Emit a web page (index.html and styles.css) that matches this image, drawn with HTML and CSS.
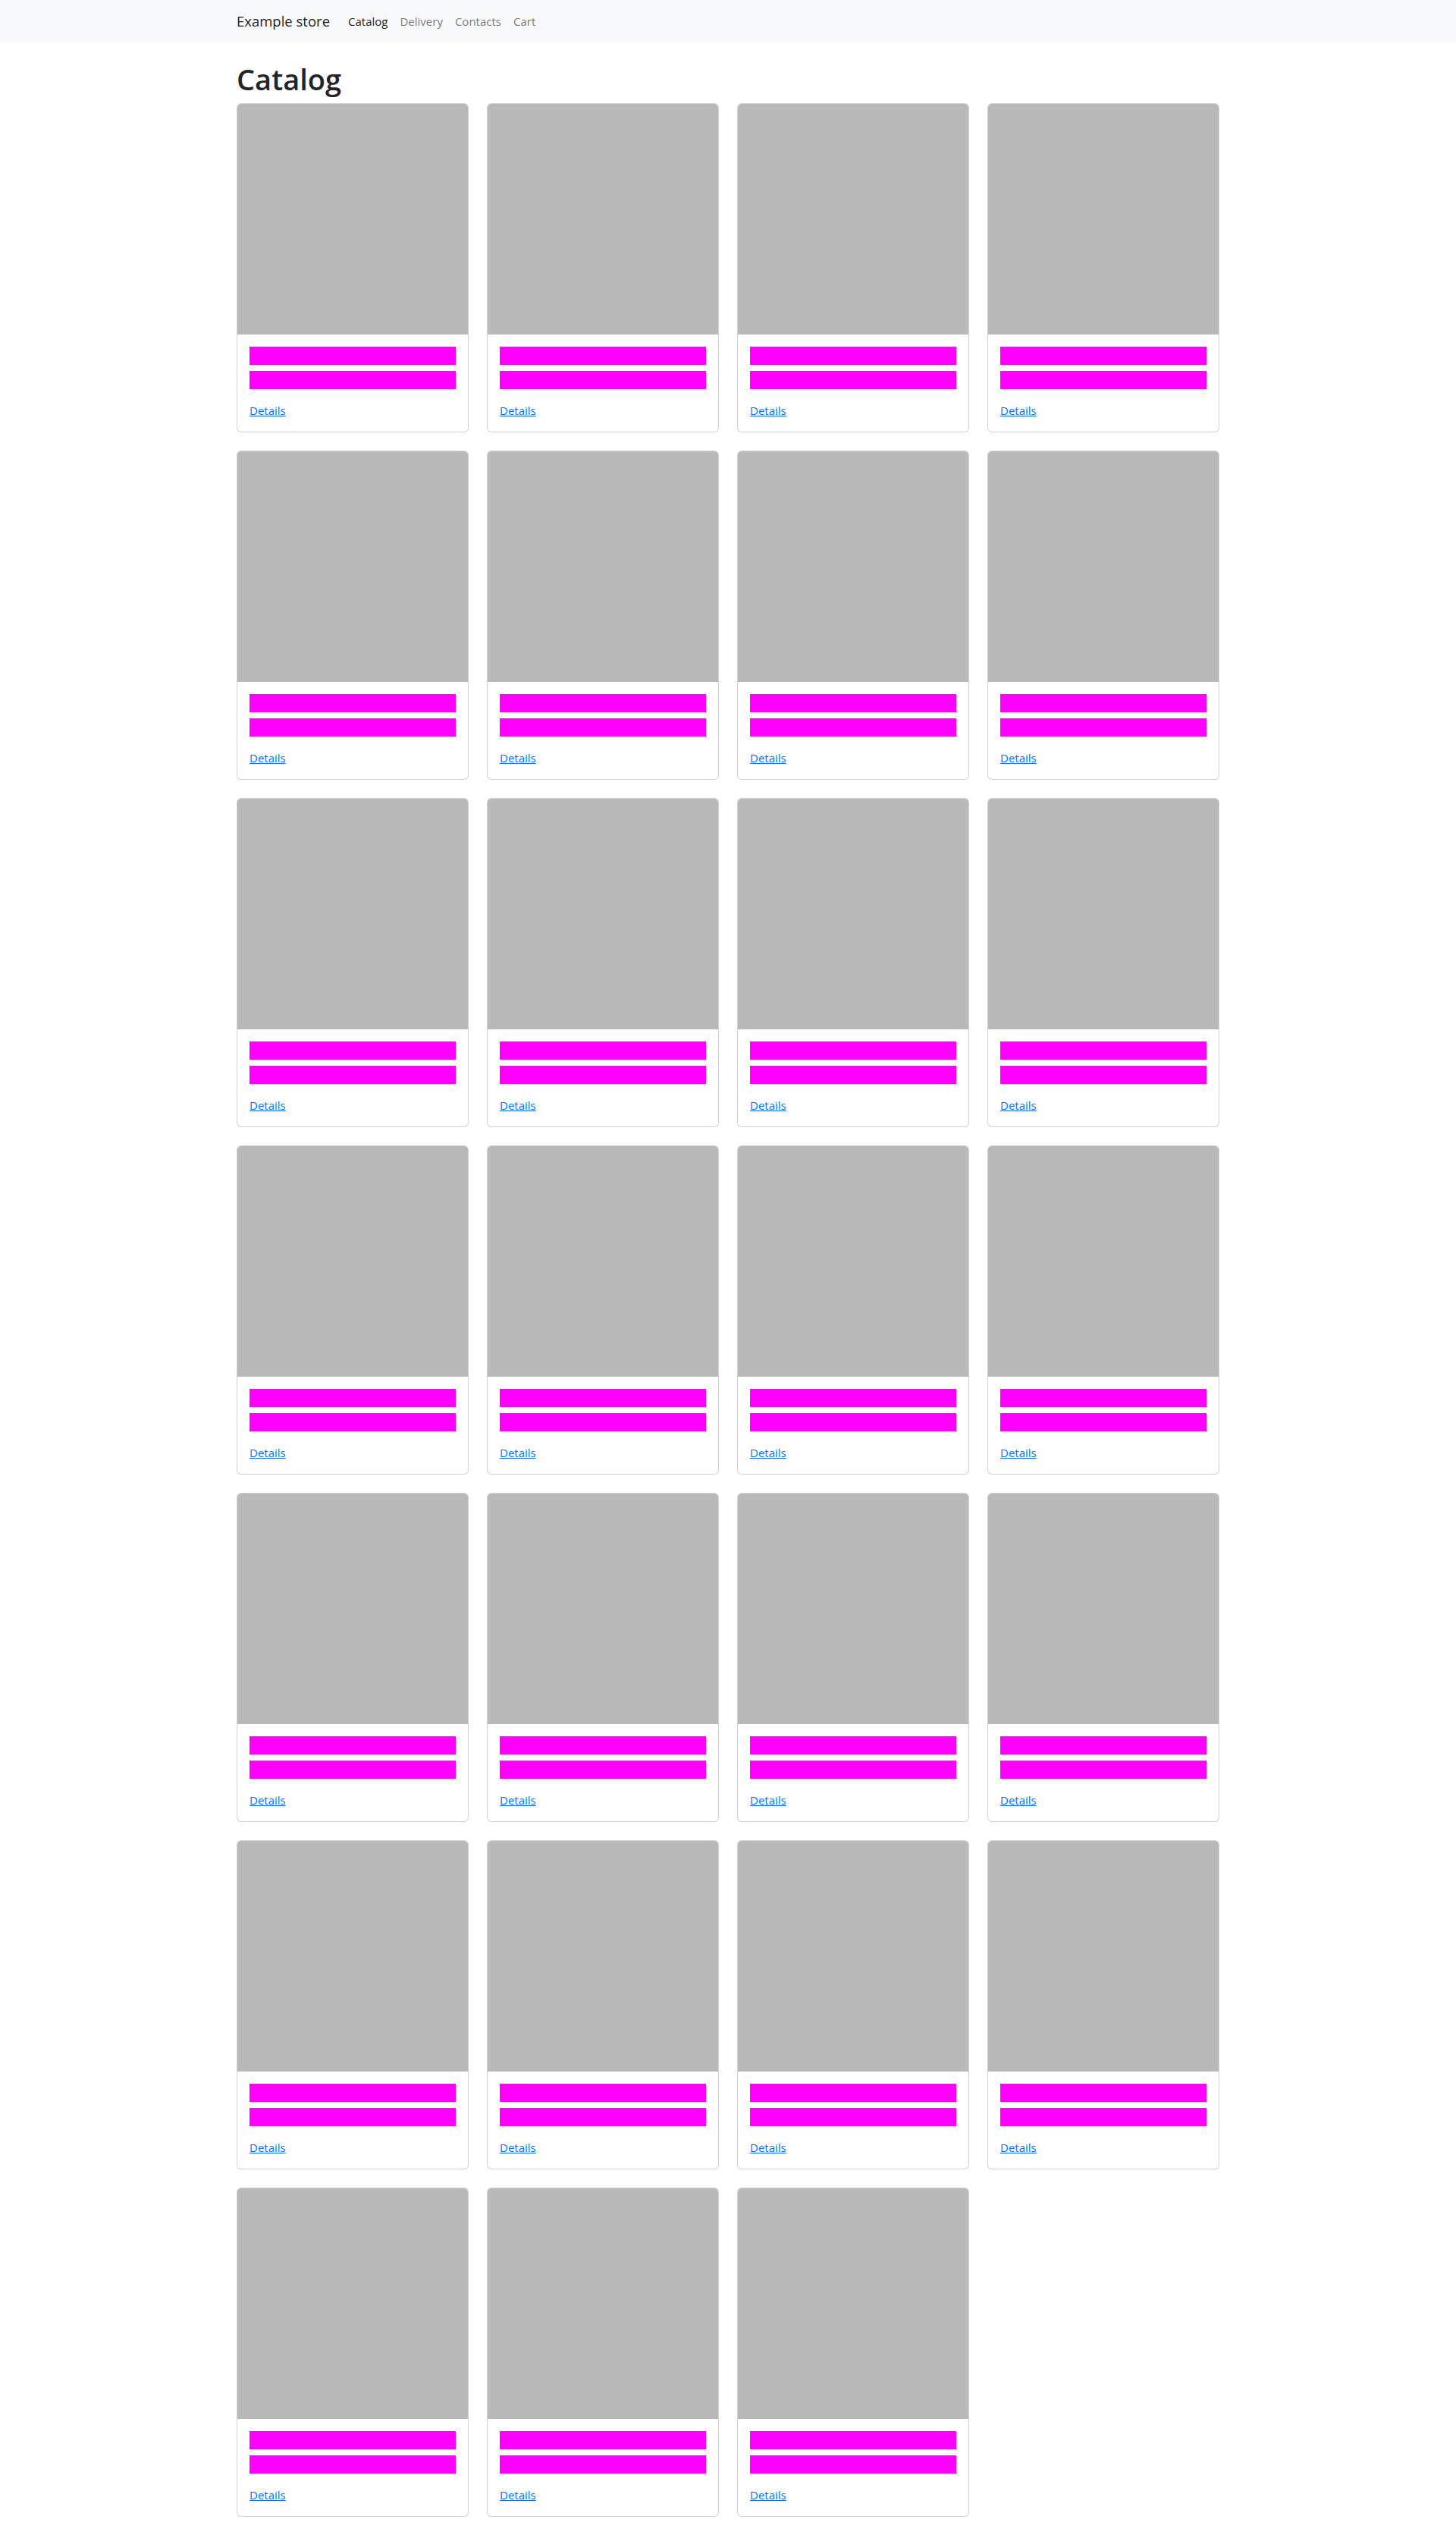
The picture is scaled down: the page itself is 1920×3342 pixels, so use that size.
FILE: index.html
```html
<!DOCTYPE html>
<html lang="en">
<head>
<meta charset="UTF-8">
<meta name="viewport" content="width=device-width, initial-scale=1.0">
<title>Example store</title>
<link rel="stylesheet" href="styles.css">
</head>
<body>

<nav class="navbar">
  <div class="container navbar-inner">
    <a class="navbar-brand" href="#">Example store</a>
    <ul class="nav-links">
      <li><a class="nav-link active" href="#">Catalog</a></li>
      <li><a class="nav-link" href="#">Delivery</a></li>
      <li><a class="nav-link" href="#">Contacts</a></li>
      <li><a class="nav-link" href="#">Cart</a></li>
    </ul>
  </div>
</nav>

<main class="container">
  <h1 class="page-title">Catalog</h1>
  <div class="catalog" id="catalog"></div>
</main>

<script>
  const catalog = document.getElementById('catalog');
  for(let i = 0; i < 27; i++) {
    const card = document.createElement('div');
    card.className = 'card';
    card.innerHTML =
      '<div class="card-img"></div>' +
      '<div class="card-body">' +
        '<h5 class="card-title"></h5>' +
        '<p class="card-text"></p>' +
        '<a class="card-link" href="#">Details</a>' +
      '</div>';
    catalog.appendChild(card);
  }
</script>
</body>
</html>
```

FILE: styles.css
```css
* {
  box-sizing: border-box;
}
body {
  margin: 0;
  font-family: "Open Sans", "Noto Sans", sans-serif;
  font-size: 16px;
  line-height: 1.5;
  color: #212529;
  background: #fff;
}
.container {
  width: 1320px;
  margin: 0 auto;
  padding: 0 12px;
}
.navbar {
  background: #f8f9fa;
  height: 56px;
}
.navbar-inner {
  display: flex;
  align-items: center;
  height: 56px;
}
.navbar-brand {
  font-size: 18.5px;
  line-height: 30px;
  color: rgba(0, 0, 0, 0.9);
  text-decoration: none;
  margin-right: 16px;
}
.nav-links {
  display: flex;
  list-style: none;
  margin: 0;
  padding: 0;
}
.nav-link {
  display: block;
  padding: 8px;
  font-size: 15px;
  color: rgba(0, 0, 0, 0.55);
  text-decoration: none;
}
.nav-link.active {
  color: rgba(0, 0, 0, 0.9);
}
.page-title {
  margin: 24px 0 8px;
  font-size: 38px;
  font-weight: 600;
  line-height: 48px;
}
.catalog {
  display: grid;
  grid-template-columns: repeat(4, 1fr);
  gap: 24px;
  padding-bottom: 24px;
}
.card {
  border: 1px solid rgba(0, 0, 0, 0.175);
  border-radius: 6px;
  overflow: hidden;
  background: #fff;
}
.card-img {
  height: 304px;
  background: #b9b9b9;
}
.card-body {
  padding: 16px;
}
.card-title {
  margin: 0 0 8px;
  height: 24px;
  background: #ff00ff;
}
.card-text {
  margin: 0 0 16px;
  height: 24px;
  background: #ff00ff;
}
.card-link {
  font-size: 15px;
  color: #0d6efd;
}
```
